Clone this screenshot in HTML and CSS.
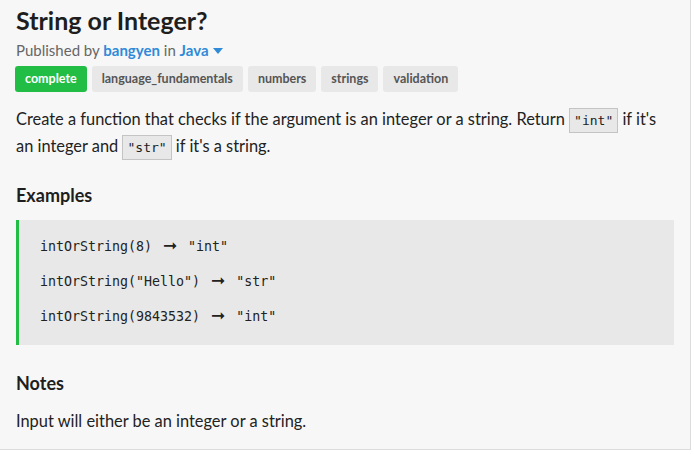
FILE: index.html
```html
<!DOCTYPE html>
<html>
<head>
<meta charset="utf-8">
<link rel="stylesheet" href="styles.css">
</head>
<body>
<div class="card">
  <h1 class="title">String or Integer?</h1>
  <div class="byline">Published by <a class="link">bangyen</a> in <a class="link">Java <span class="caret"></span></a></div>
  <div class="tags">
    <span class="tag tag-done">complete</span>
    <span class="tag">language_fundamentals</span>
    <span class="tag">numbers</span>
    <span class="tag">strings</span>
    <span class="tag">validation</span>
  </div>
  <p class="text intro">Create a function that checks if the argument is an integer or a string. Return <code class="inline">"int"</code> if it's an integer and <code class="inline">"str"</code> if it's a string.</p>
  <h2 class="heading">Examples</h2>
  <div class="examples">
    <div class="ex">intOrString(8) <span class="arrow">➞</span> "int"</div>
    <div class="ex">intOrString("Hello") <span class="arrow">➞</span> "str"</div>
    <div class="ex">intOrString(9843532) <span class="arrow">➞</span> "int"</div>
  </div>
  <h2 class="heading notes-heading">Notes</h2>
  <p class="text notes">Input will either be an integer or a string.</p>
</div>
</body>
</html>
```
FILE: styles.css
```css
html, body { margin: 0; padding: 0; background: #ffffff; }
body { font-family: Lato, "Noto Sans", sans-serif; color: #222; }
.card {
  box-sizing: border-box;
  width: 691px;
  background: #f7f7f7;
  border-right: 1px solid #dcdcdc;
  border-bottom: 1px solid #dcdcdc;
  padding: 4px 16px 15px 16px;
}
.title { margin: 0; font-size: 25px; font-weight: 700; line-height: 32px; color: #1e1e1e; }
.byline { font-size: 15px; color: #666; line-height: 22px; margin-top: 3px; }
.link { color: #2f8ad8; font-weight: 700; }
.caret { display: inline-block; width: 0; height: 0; border-left: 5px solid transparent; border-right: 5px solid transparent; border-top: 6px solid #2f8ad8; vertical-align: middle; margin-left: 1px; position: relative; top: -1px; }
.tags { display: flex; gap: 5px; margin-top: 5px; margin-left: -1px; }
.tag { background: #e8e8e8; color: #555; font-size: 12.5px; font-weight: 700; line-height: 26px; padding: 0 10px; border-radius: 3px; }
.tag-done { background: #22bd45; color: #fff; }
.text { font-size: 16.4px; line-height: 27px; margin: 0; color: #222; }
.intro { margin-top: 13px; }
.inline { font-family: "DejaVu Sans Mono", monospace; font-size: 13px; line-height: 1; background: #e8e8e8; border: 1px solid #c4c4c4; padding: 4px 4px; }
.heading { font-size: 18px; font-weight: 700; margin: 24px 0 0 0; line-height: 24px; color: #1e1e1e; }
.examples { margin-top: 13px; background: #e8e8e8; border-left: 3px solid #22bd45; padding: 17px 21px 18px; display: flex; flex-direction: column; gap: 15px; }
.ex { font-family: "DejaVu Sans Mono", monospace; font-size: 13.3px; line-height: 20px; color: #222; }
.arrow { display: inline-block; width: 20px; text-align: center; font-family: "DejaVu Sans", sans-serif; font-size: 17px; font-weight: 700; line-height: 1; }
.notes-heading { margin-top: 26px; }
.notes { margin-top: 12px; }
```
